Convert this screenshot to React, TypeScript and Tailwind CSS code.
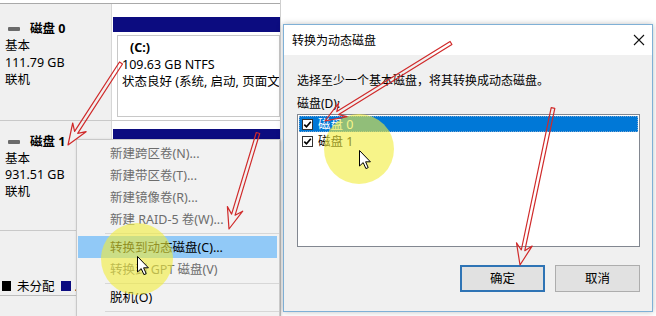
import React from "react";

type Pt = [number, number];

function arrowPoints(x1: number, y1: number, x2: number, y2: number): string {
  const dx = x2 - x1;
  const dy = y2 - y1;
  const len = Math.hypot(dx, dy);
  const ux = dx / len;
  const uy = dy / len;
  const px = -uy;
  const py = ux;
  const w = 1.8;
  const hw = 8;
  const L = 21;
  const neck = 15;
  const bx = x2 - ux * L;
  const by = y2 - uy * L;
  const nx = x2 - ux * neck;
  const ny = y2 - uy * neck;
  const pts: Pt[] = [
    [x1 + px * w, y1 + py * w],
    [nx + px * w, ny + py * w],
    [bx + px * hw, by + py * hw],
    [x2, y2],
    [bx - px * hw, by - py * hw],
    [nx - px * w, ny - py * w],
    [x1 - px * w, y1 - py * w],
  ];
  return pts.map((p) => `${p[0].toFixed(1)},${p[1].toFixed(1)}`).join(" ");
}

const arrows: [number, number, number, number][] = [
  [121, 63, 68, 145],
  [258, 133, 229, 229],
  [451, 43, 325, 121],
  [553, 108, 520, 265],
];

function Cursor({ x, y }: { x: number; y: number }) {
  return (
    <path
      transform={`translate(${x} ${y})`}
      d="M0.5 0.5 L0.5 16 L4.2 12.6 L6.9 18.6 L9.2 17.6 L6.6 11.8 L11.4 11.8 Z"
      fill="#ffffff"
      stroke="#000000"
      strokeWidth="1"
      strokeLinejoin="round"
    />
  );
}

function Check() {
  return (
    <div className="w-[11px] h-[11px] border border-[#333333] bg-white flex items-center justify-center shrink-0">
      <svg width="9" height="9" viewBox="0 0 9 9">
        <path d="M1.3 4.6 L3.5 6.8 L7.8 1.8" fill="none" stroke="#000" strokeWidth="1.7" />
      </svg>
    </div>
  );
}

function MenuItem({ label, disabled, active }: { label: string; disabled?: boolean; active?: boolean }) {
  return (
    <div
      className={
        "h-[22px] ml-[1px] mr-[2px] pl-[32px] flex items-center whitespace-nowrap " +
        (active ? "bg-[#91c9f7] " : "") +
        (disabled ? "text-[#6d6d6d]" : "text-black")
      }
    >
      {label}
    </div>
  );
}

function MenuSep() {
  return (
    <div className="h-[6px] flex items-center pl-[28px]">
      <div className="h-[1px] w-full bg-[#d7d7d7]" />
    </div>
  );
}

export default function App() {
  return (
    <div className="relative w-[656px] h-[316px] overflow-hidden bg-white text-black font-['Noto_Sans','Noto_Sans_CJK_SC',sans-serif] text-[12.5px] leading-[17px]">
      <div className="flex h-full">
        {/* Disk management pane */}
        <div className="w-[281px] h-full shrink-0 flex flex-col bg-[#f0f0f0] border-r border-[#cfcfcf]">
          <div className="h-[4px] bg-white border-b border-[#a9a9a9] shrink-0" />
          {/* Disk 0 */}
          <div className="flex h-[117px] shrink-0 border-b border-[#c9c9c9]">
            <div className="w-[112px] shrink-0 border-r border-[#d6d6d6] pl-[5px] pt-[16px]">
              <div className="flex items-center">
                <div className="w-[12px] h-[4px] ml-[3px] mr-[10px] bg-[#6a6a6a] rounded-[1px]" />
                <span className="font-bold">磁盘 0</span>
              </div>
              <div>基本</div>
              <div>111.79 GB</div>
              <div>联机</div>
            </div>
            <div className="flex-1 bg-white pl-[1px] pt-[13px] overflow-hidden">
              <div className="h-[15px] bg-[#0c0c80]" />
              <div className="ml-[4px] mt-[3px] h-[82px] border border-[#c8c8c8] pt-[3px] pl-[4px] whitespace-nowrap overflow-hidden">
                <div className="pl-[8px] font-bold">(C:)</div>
                <div>109.63 GB NTFS</div>
                <div className="overflow-hidden">状态良好 (系统, 启动, 页面文</div>
              </div>
            </div>
          </div>
          {/* Disk 1 */}
          <div className="flex h-[110px] shrink-0 border-b border-[#c9c9c9]">
            <div className="w-[112px] shrink-0 border-r border-[#d6d6d6] pl-[5px] pt-[13px] leading-[16.7px]">
              <div className="flex items-center">
                <div className="w-[12px] h-[4px] ml-[3px] mr-[10px] bg-[#6a6a6a] rounded-[1px]" />
                <span className="font-bold">磁盘 1</span>
              </div>
              <div>基本</div>
              <div>931.51 GB</div>
              <div>联机</div>
            </div>
            <div className="flex-1 bg-white pl-[1px] pt-[8px]">
              <div className="h-[15px] bg-[#0c0c80]" />
            </div>
          </div>
          <div className="h-[46px] shrink-0" />
          {/* Legend */}
          <div className="h-[19px] shrink-0 flex items-center pl-[2px] border-b border-[#bdbdbd] whitespace-nowrap">
            <div className="w-[9px] h-[10px] bg-black" />
            <span className="ml-[6px]">未分配</span>
            <div className="ml-[6px] w-[10px] h-[10px] bg-[#0c0c80]" />
            <span className="ml-[4px]">.</span>
          </div>
          <div className="flex-1" />
        </div>

        {/* Dialog area */}
        <div className="flex-1 pt-[24px]">
          <div className="ml-[2px] w-[370px] h-[288px] flex flex-col border border-[#7fb0d6] bg-white shadow-[0_0_6px_rgba(0,0,0,0.25)]">
            <div className="h-[30px] shrink-0 flex items-center justify-between pl-[8px] pr-[7px] bg-white">
              <span className="text-[12px]">转换为动态磁盘</span>
              <svg width="12" height="12" viewBox="0 0 12 12">
                <path d="M1 1 L11 11 M11 1 L1 11" stroke="#111" strokeWidth="1.1" />
              </svg>
            </div>
            <div className="flex-1 bg-[#f0f0f0] pl-[13px] pr-[12px] pt-[17px] flex flex-col text-[12px]">
              <div className="whitespace-nowrap">选择至少一个基本磁盘，将其转换成动态磁盘。</div>
              <div className="mt-[6px]">磁盘(D):</div>
              <div className="mt-[2px] h-[133px] border border-[#828790] bg-white p-[1px] flex flex-col text-[12.5px]">
                <div className="h-[16px] flex items-center pl-[2px] bg-[#0078d7] text-white border border-dotted border-[#7aa7d1]">
                  <Check />
                  <span className="ml-[5px]">磁盘 0</span>
                </div>
                <div className="h-[16px] flex items-center pl-[3px] mt-[1px]">
                  <Check />
                  <span className="ml-[5px]">磁盘 1</span>
                </div>
              </div>
              <div className="mt-[18px] flex justify-end gap-[10px] text-[12.5px]">
                <div className="w-[85px] h-[27px] border-2 border-[#2f74b5] bg-[#e1e1e1] flex items-center justify-center">
                  确定
                </div>
                <div className="w-[85px] h-[27px] border border-[#adadad] bg-[#e1e1e1] flex items-center justify-center">
                  取消
                </div>
              </div>
            </div>
          </div>
        </div>
      </div>

      {/* Context menu */}
      <div className="absolute left-[76px] top-[139px] w-[204px] h-[190px] bg-[#f2f2f2] border border-[#c9c9c9] pt-[2px] shadow-[1px_1px_3px_rgba(0,0,0,0.2)]">
        <MenuItem label="新建跨区卷(N)..." disabled />
        <MenuItem label="新建带区卷(T)..." disabled />
        <MenuItem label="新建镜像卷(R)..." disabled />
        <MenuItem label="新建 RAID-5 卷(W)..." disabled />
        <MenuSep />
        <MenuItem label="转换到动态磁盘(C)..." active />
        <MenuItem label="转换到 GPT 磁盘(V)" disabled />
        <MenuSep />
        <MenuItem label="脱机(O)" />
        <MenuSep />
      </div>

      {/* Annotations */}
      <svg className="absolute inset-0 pointer-events-none" width="656" height="316" viewBox="0 0 656 316">
        <circle cx="137" cy="259" r="36" fill="#f2ec3a" fillOpacity="0.6" />
        <circle cx="359" cy="149" r="35" fill="#f2ec3a" fillOpacity="0.6" />
        {arrows.map((a, i) => (
          <polygon
            key={i}
            points={arrowPoints(a[0], a[1], a[2], a[3])}
            fill="none"
            stroke="#d02a2a"
            strokeWidth="1.2"
            strokeLinejoin="round"
          />
        ))}
        <Cursor x={137} y={256} />
        <Cursor x={359} y={150} />
      </svg>
    </div>
  );
}
